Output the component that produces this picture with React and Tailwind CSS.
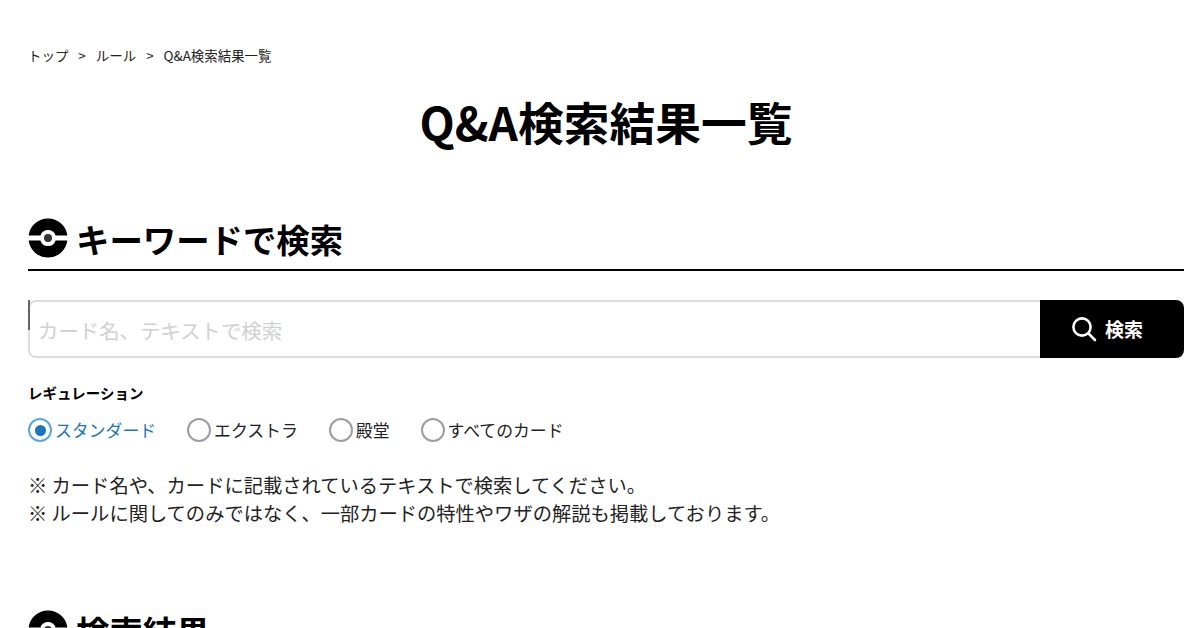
const FONT = "font-['Noto_Sans_CJK_JP','Noto_Sans',sans-serif]";

const BallIcon = () => (
  <svg width="40" height="40" viewBox="0 0 40 40" className="shrink-0">
    <path d="M0.66 17.5 A19.5 19.5 0 0 1 39.34 17.5 L27.6 17.5 A8 8 0 0 0 12.4 17.5 Z" fill="#000" />
    <path d="M0.66 22.5 A19.5 19.5 0 0 0 39.34 22.5 L27.6 22.5 A8 8 0 0 1 12.4 22.5 Z" fill="#000" />
    <circle cx="20" cy="20" r="4" fill="#333" />
  </svg>
);

const Heading = ({ children, line = true }) => (
  <div className={`flex items-center gap-[8px] pb-[10px] ${line ? "border-b-2 border-black" : ""}`}>
    <BallIcon />
    <h2 className="pt-[2px] text-[33.4px] leading-[40px] font-bold text-black">{children}</h2>
  </div>
);

const Radio = ({ label, checked }) => (
  <label className="flex items-center gap-[3px]">
    <span
      className={`flex items-center justify-center w-[24px] h-[24px] rounded-full border-2 ${
        checked ? "border-[#5aa5dc]" : "border-[#9c9ca8]"
      }`}
    >
      {checked && <span className="w-[11px] h-[11px] rounded-full bg-[#1a75bc]" />}
    </span>
    <span className={`text-[16.85px] leading-[24px] ${checked ? "text-[#1a75bc]" : "text-[#222]"}`}>{label}</span>
  </label>
);

export default function App() {
  return (
    <div className={`${FONT} h-[628px] overflow-hidden bg-white pl-[28px] pr-[16px] pt-[45px] text-black`}>
      <nav className="flex items-center text-[13.45px] leading-[20px] text-[#222]">
        <span>トップ</span>
        <span className="mx-[10px]">&gt;</span>
        <span>ルール</span>
        <span className="mx-[10px]">&gt;</span>
        <span>Q&amp;A検索結果一覧</span>
      </nav>

      <h1 className="mt-[22px] text-center text-[45.75px] leading-[68px] font-bold">Q&amp;A検索結果一覧</h1>

      <div className="mt-[62px]">
        <Heading>キーワードで検索</Heading>
      </div>

      <div className="relative mt-[29px] flex h-[58px]">
        <span className="absolute left-0 top-0 h-[30px] w-[2px] bg-[#666]" />
        <div className="flex flex-1 items-center rounded-l-[8px] border-2 border-r-0 border-[#dcdcdc] pl-[8px] pt-[2px] text-[20.4px] text-[#cfcfd6]">
          カード名、テキストで検索
        </div>
        <button className="flex w-[144px] items-center justify-center gap-[8px] rounded-r-[8px] bg-black pr-[10px] text-[19px] font-bold text-white">
          <svg width="26" height="26" viewBox="0 0 26 26" fill="none" stroke="#fff" strokeWidth="2.6" strokeLinecap="round">
            <circle cx="11" cy="11" r="8.6" />
            <path d="M17.5 17.5 L24 24" />
          </svg>
          検索
        </button>
      </div>

      <p className="mt-[25px] text-[14.5px] leading-[20px] font-bold">レギュレーション</p>

      <div className="mt-[15px] flex items-center gap-[31px]">
        <Radio label="スタンダード" checked />
        <Radio label="エクストラ" />
        <Radio label="殿堂" />
        <Radio label="すべてのカード" />
      </div>

      <div className="mt-[29px] text-[19.27px] leading-[28px] text-[#222]">
        <p>※ カード名や、カードに記載されているテキストで検索してください。</p>
        <p>※ ルールに関してのみではなく、一部カードの特性やワザの解説も掲載しております。</p>
      </div>

      <div className="mt-[82px]">
        <Heading line={false}>検索結果</Heading>
      </div>
    </div>
  );
}
